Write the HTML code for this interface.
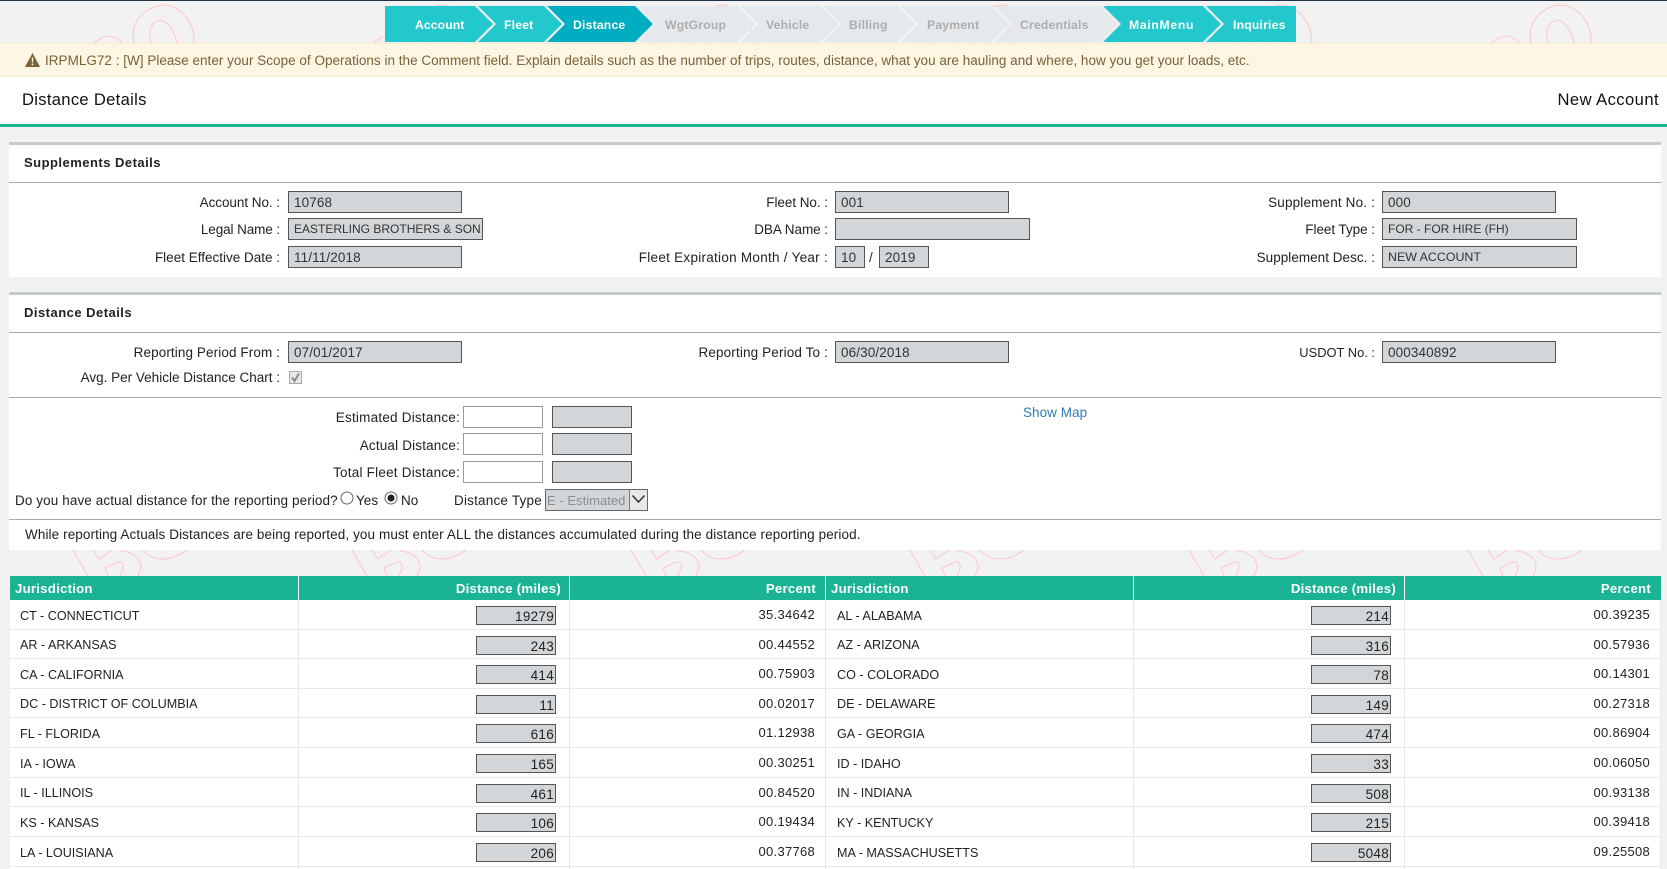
<!DOCTYPE html>
<html lang="en"><head><meta charset="utf-8"><title>Distance Details</title>
<style>
html,body{margin:0;padding:0;width:1667px;height:869px;overflow:hidden}
#wrap{width:1667px;height:869px;overflow:hidden;position:relative;background:#f2f2f2;font-family:"Liberation Sans",sans-serif;font-size:13.5px;color:#222;letter-spacing:.03px}
.a{position:absolute}
.t{position:absolute;height:20px;line-height:20px;white-space:nowrap}
.panel{position:absolute;left:9px;width:1652px;background:#fff;border-top:3px solid #c3cbcc;box-sizing:border-box}
.rule{position:absolute;left:9px;width:1652px;height:1px;background:#aaa}
.in{position:absolute;box-sizing:border-box;background:#d3d6d8;border:1px solid #555;height:22px;line-height:21px;padding-left:5px;color:#333;white-space:nowrap;overflow:hidden;letter-spacing:.12px}
.cap{font-size:12.4px;letter-spacing:0}
.w{background:#fff;border:1px solid #999}
.nt{position:absolute;top:15px;height:20px;line-height:20px;font-size:12.2px;font-weight:bold;color:#fff;white-space:nowrap;letter-spacing:.2px}
.d{color:#adadad}
.title{font-weight:bold;font-size:13px;letter-spacing:.48px}
.lb{letter-spacing:.17px}
table{position:absolute;left:10px;top:576px;width:1651px;table-layout:fixed;border-collapse:separate;border-spacing:0;background:#fff}
th{height:24px;padding:0 8px 0 5px;background:#1ab394;color:#fff;font-size:13.2px;font-weight:bold;text-align:right;border-right:1px solid #fff;box-sizing:border-box;letter-spacing:.25px}
th.l{text-align:left}
td{position:relative;padding:0 10px;border-right:1px solid #e8e8e8;border-bottom:1px solid #e8e8e8;box-sizing:border-box;font-size:13px;text-align:right;white-space:nowrap;letter-spacing:.28px}
td.l{text-align:left;font-size:12.6px;letter-spacing:0;padding-top:2px}
td div{position:absolute;right:13px;top:6px;width:80px;height:19px;box-sizing:border-box;background:#d3d6d8;border:1px solid #555;text-align:right;line-height:19px;padding-right:1px;font-size:13.5px}
td.c{padding:0}
tr.h30{height:30px}tr.h29{height:29px}
</style></head><body>
<div id="wrap">

<!-- watermark -->
<svg class="a" style="left:0;top:0" width="1667" height="869" fill="none" stroke="#ffc8d0" stroke-width="1.1">
<defs>
<g id="wt"><path d="M134,43C129,20 148,5 165,5C183,7 195,25 194,43"/><path d="M151,43C148,34 150,22 160,20C168,21 175,32 177,43"/><path d="M94,43C100,38 106,36 110,36C115,37 119,39 122,43"/></g>
<g id="wb"><path d="M73,550L88,576"/><path d="M93,550L99,559L112,550"/><path d="M120,551C132,551 141,559 141,566C141,570 139,573 138,576"/><path d="M108,576L105,568L118,562C122,561 124,565 123,569L120,576"/><path d="M143,550C150,558 157,559 163,559C171,559 180,555 187,550"/></g>
</defs>
<use href="#wt"/><use href="#wt" x="279.4"/><use href="#wt" x="558.8"/><use href="#wt" x="838.2"/><use href="#wt" x="1117.6"/><use href="#wt" x="1397"/>
<use href="#wb"/><use href="#wb" x="279"/><use href="#wb" x="558"/><use href="#wb" x="837"/><use href="#wb" x="1116"/><use href="#wb" x="1395"/><use href="#wb" x="1674"/>
</svg>
<div class="a" style="left:0;top:0;width:1667px;height:1px;background:#1f3345"></div>

<!-- stepper -->
<svg class="a" style="left:0;top:0" width="1667" height="44">
<polygon fill="#22c8cc" points="385,6 475,6 493,24 475,42 385,42"/>
<polygon fill="#22c8cc" points="478,6 544,6 562,24 544,42 478,42 496,24"/>
<polygon fill="#00adc1" points="547,6 635,6 653,24 635,42 547,42 565,24"/>
<polygon fill="#e6e9ec" points="638,6 737,6 755,24 737,42 638,42 656,24"/>
<polygon fill="#e6e9ec" points="740,6 820,6 838,24 820,42 740,42 758,24"/>
<polygon fill="#e6e9ec" points="823,6 897,6 915,24 897,42 823,42 841,24"/>
<polygon fill="#e6e9ec" points="900,6 991,6 1009,24 991,42 900,42 918,24"/>
<polygon fill="#e6e9ec" points="994,6 1100,6 1118,24 1100,42 994,42 1012,24"/>
<polygon fill="#22c8cc" points="1103,6 1203,6 1221,24 1203,42 1103,42 1121,24"/>
<polygon fill="#22c8cc" points="1206,6 1296,6 1296,42 1206,42 1224,24"/>
</svg>
<span class="nt" style="left:415px;letter-spacing:.1px">Account</span>
<span class="nt" style="left:504px">Fleet</span>
<span class="nt" style="left:573px">Distance</span>
<span class="nt d" style="left:665px">WgtGroup</span>
<span class="nt d" style="left:766px">Vehicle</span>
<span class="nt d" style="left:849px">Billing</span>
<span class="nt d" style="left:927px">Payment</span>
<span class="nt d" style="left:1020px">Credentials</span>
<span class="nt" style="left:1129px;letter-spacing:.7px">MainMenu</span>
<span class="nt" style="left:1233px">Inquiries</span>

<!-- alert -->
<div class="a" style="left:0;top:43px;width:1667px;height:34px;box-sizing:border-box;background:#fdf6e3;border-top:1px solid #fbeacb;border-bottom:1px solid #fbeacb"></div>
<svg class="a" style="left:25px;top:53px" width="15" height="14" viewBox="0 0 15 14"><path fill="#7a6238" d="M7.5 0L15 14H0Z"/><path fill="#fdf6e3" d="M6.7 4.5h1.6l-.2 5H6.9ZM6.7 10.5h1.6v1.7H6.7Z"/></svg>
<span class="t" style="left:45px;top:51px;color:#7a6238;letter-spacing:.02px">IRPMLG72 : [W] Please enter your Scope of Operations in the Comment field. Explain details such as the number of trips, routes, distance, what you are hauling and where, how you get your loads, etc.</span>

<!-- header -->
<div class="a" style="left:0;top:77px;width:1667px;height:47px;background:#fff"></div>
<div class="a" style="left:0;top:124px;width:1667px;height:3px;background:#1ab394"></div>
<span class="t" style="left:22px;top:90px;font-size:16.6px;color:#111;letter-spacing:.3px">Distance Details</span>
<span class="t" style="right:8px;top:90px;font-size:16.6px;color:#111;letter-spacing:.42px">New Account</span>

<!-- section 1 -->
<div class="panel" style="top:142px;height:135px"></div>
<span class="t title" style="left:24px;top:153px">Supplements Details</span>
<div class="rule" style="top:182px"></div>
<span class="t" style="right:1387px;top:193px;letter-spacing:-.05px">Account No. :</span>
<div class="in" style="left:288px;top:191px;width:174px;">10768</div>
<span class="t" style="right:1387px;top:220px;letter-spacing:-.1px">Legal Name :</span>
<div class="in cap" style="left:288px;top:218px;width:195px;font-size:12px">EASTERLING BROTHERS &amp; SON</div>
<span class="t" style="right:1387px;top:248px;letter-spacing:0">Fleet Effective Date :</span>
<div class="in" style="left:288px;top:246px;width:174px;">11/11/2018</div>

<span class="t" style="right:839px;top:193px;letter-spacing:-.05px">Fleet No. :</span>
<div class="in" style="left:835px;top:191px;width:174px;">001</div>
<span class="t" style="right:839px;top:220px;letter-spacing:-.05px">DBA Name :</span>
<div class="in" style="left:835px;top:218px;width:195px;"></div>
<span class="t" style="right:839px;top:248px;letter-spacing:.27px">Fleet Expiration Month / Year :</span>
<div class="in" style="left:835px;top:246px;width:30px;">10</div>
<span class="t" style="left:869px;top:248px">/</span>
<div class="in" style="left:879px;top:246px;width:50px;">2019</div>

<span class="t" style="right:292px;top:193px;letter-spacing:.16px">Supplement No. :</span>
<div class="in" style="left:1382px;top:191px;width:174px;">000</div>
<span class="t" style="right:292px;top:220px;letter-spacing:-.05px">Fleet Type :</span>
<div class="in cap" style="left:1382px;top:218px;width:195px;font-size:12px">FOR - FOR HIRE (FH)</div>
<span class="t" style="right:292px;top:248px">Supplement Desc. :</span>
<div class="in cap" style="left:1382px;top:246px;width:195px;">NEW ACCOUNT</div>

<!-- section 2 -->
<div class="panel" style="top:292px;height:258px"></div>
<span class="t title" style="left:24px;top:303px">Distance Details</span>
<div class="rule" style="top:332px"></div>
<span class="t" style="right:1387px;top:343px;letter-spacing:.1px">Reporting Period From :</span>
<div class="in" style="left:288px;top:341px;width:174px;">07/01/2017</div>
<span class="t" style="right:839px;top:343px;letter-spacing:.14px">Reporting Period To :</span>
<div class="in" style="left:835px;top:341px;width:174px;">06/30/2018</div>
<span class="t" style="right:292px;top:343px;font-size:12.9px;letter-spacing:0">USDOT No. :</span>
<div class="in" style="left:1382px;top:341px;width:174px;">000340892</div>
<span class="t" style="right:1387px;top:368px;letter-spacing:0">Avg. Per Vehicle Distance Chart :</span>
<svg class="a" style="left:289px;top:371px" width="13" height="13"><rect x=".5" y=".5" width="12" height="12" fill="#e8e8e8" stroke="#aaa"/><path d="M3 6.5L5.5 10L10 2.5" fill="none" stroke="#8a8a8a" stroke-width="2"/></svg>
<div class="rule" style="top:397px"></div>

<span class="t lb" style="right:1207px;top:408px;letter-spacing:.22px">Estimated Distance:</span>
<div class="in w" style="left:463px;top:406px;width:80px;"></div>
<div class="in" style="left:552px;top:406px;width:80px;"></div>
<span class="t lb" style="right:1207px;top:436px">Actual Distance:</span>
<div class="in w" style="left:463px;top:433px;width:80px;"></div>
<div class="in" style="left:552px;top:433px;width:80px;"></div>
<span class="t lb" style="right:1207px;top:463px;letter-spacing:.22px">Total Fleet Distance:</span>
<div class="in w" style="left:463px;top:461px;width:80px;"></div>
<div class="in" style="left:552px;top:461px;width:80px;"></div>
<span class="t" style="left:1023px;top:403px;color:#337ab7;letter-spacing:.05px">Show Map</span>

<span class="t" style="left:15px;top:491px;letter-spacing:.1px">Do you have actual distance for the reporting period?</span>
<svg class="a" style="left:340px;top:491px" width="14" height="14"><circle cx="7" cy="7" r="6" fill="#fff" stroke="#666"/></svg>
<span class="t" style="left:356px;top:491px">Yes</span>
<svg class="a" style="left:384px;top:491px" width="14" height="14"><circle cx="7" cy="7" r="6" fill="#fff" stroke="#666"/><circle cx="7" cy="7" r="3.5" fill="#222"/></svg>
<span class="t" style="left:401px;top:491px">No</span>
<span class="t" style="left:454px;top:491px;letter-spacing:.2px">Distance Type</span>
<div class="a" style="left:545px;top:489px;width:103px;height:22px;box-sizing:border-box;background:#d3d6d8;border:1px solid #666;color:#8b8e90;line-height:21px;padding-left:1px;white-space:nowrap;overflow:hidden;font-size:13px">E - Estimated
<div class="a" style="right:0;top:0;width:17px;height:20px;background:#e8e8e8;border-left:1px solid #777"></div>
<svg class="a" style="right:1px;top:4px" width="15" height="10"><path d="M1.5 1.5L7.5 8L13.5 1.5" fill="none" stroke="#333" stroke-width="1.5"/></svg>
</div>
<div class="rule" style="top:519px"></div>
<span class="t" style="left:25px;top:525px;letter-spacing:.1px">While reporting Actuals Distances are being reported, you must enter ALL the distances accumulated during the distance reporting period.</span>

<!-- table -->
<table>
<colgroup><col style="width:289px"><col style="width:271px"><col style="width:256px"><col style="width:308px"><col style="width:271px"><col style="width:256px"></colgroup>
<tr><th class="l">Jurisdiction</th><th>Distance (miles)</th><th style="padding-right:9px">Percent</th><th class="l">Jurisdiction</th><th>Distance (miles)</th><th style="border-right:0;padding-right:10px">Percent</th></tr>
<tr class="h30"><td class="l">CT - CONNECTICUT</td><td class="c"><div>19279</div></td><td>35.34642</td><td class="l" style="padding-left:11px">AL - ALABAMA</td><td class="c"><div>214</div></td><td>00.39235</td></tr>
<tr class="h29"><td class="l">AR - ARKANSAS</td><td class="c"><div>243</div></td><td>00.44552</td><td class="l" style="padding-left:11px">AZ - ARIZONA</td><td class="c"><div>316</div></td><td>00.57936</td></tr>
<tr class="h30"><td class="l">CA - CALIFORNIA</td><td class="c"><div>414</div></td><td>00.75903</td><td class="l" style="padding-left:11px">CO - COLORADO</td><td class="c"><div>78</div></td><td>00.14301</td></tr>
<tr class="h29"><td class="l">DC - DISTRICT OF COLUMBIA</td><td class="c"><div>11</div></td><td>00.02017</td><td class="l" style="padding-left:11px">DE - DELAWARE</td><td class="c"><div>149</div></td><td>00.27318</td></tr>
<tr class="h30"><td class="l">FL - FLORIDA</td><td class="c"><div>616</div></td><td>01.12938</td><td class="l" style="padding-left:11px">GA - GEORGIA</td><td class="c"><div>474</div></td><td>00.86904</td></tr>
<tr class="h30"><td class="l">IA - IOWA</td><td class="c"><div>165</div></td><td>00.30251</td><td class="l" style="padding-left:11px">ID - IDAHO</td><td class="c"><div>33</div></td><td>00.06050</td></tr>
<tr class="h29"><td class="l">IL - ILLINOIS</td><td class="c"><div>461</div></td><td>00.84520</td><td class="l" style="padding-left:11px">IN - INDIANA</td><td class="c"><div>508</div></td><td>00.93138</td></tr>
<tr class="h30"><td class="l">KS - KANSAS</td><td class="c"><div>106</div></td><td>00.19434</td><td class="l" style="padding-left:11px">KY - KENTUCKY</td><td class="c"><div>215</div></td><td>00.39418</td></tr>
<tr class="h30"><td class="l">LA - LOUISIANA</td><td class="c"><div>206</div></td><td>00.37768</td><td class="l" style="padding-left:11px">MA - MASSACHUSETTS</td><td class="c"><div>5048</div></td><td>09.25508</td></tr>
<tr class="h30"><td></td><td></td><td></td><td></td><td></td><td></td></tr>
</table>
</div>
</body></html>
